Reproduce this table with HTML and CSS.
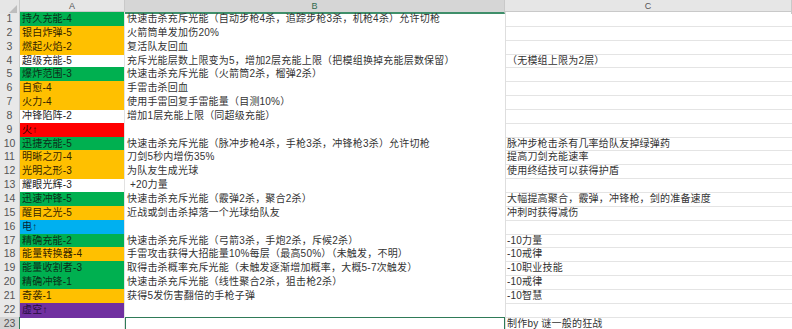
FILE: index.html
```html
<!DOCTYPE html>
<html lang="zh">
<head>
<meta charset="utf-8">
<link rel="stylesheet" href="styles.css">
</head>
<body>
<div class="sheet">
  <div class="row head">
    <div class="rn corner"><span class="tri"></span></div>
    <div class="ch">A</div>
    <div class="ch sel">B</div>
    <div class="ch">C</div>
  </div>
  <div class="row"><div class="rn">1</div><div class="a green">持久充能-4</div><div class="b">快速击杀充斥光能（自动步枪4杀，追踪步枪3杀，机枪4杀）允许切枪</div><div class="c"></div></div>
  <div class="row"><div class="rn">2</div><div class="a orange">银白炸弹-5</div><div class="b">火箭筒单发加伤20%</div><div class="c"></div></div>
  <div class="row"><div class="rn">3</div><div class="a orange">燃起火焰-2</div><div class="b">复活队友回血</div><div class="c"></div></div>
  <div class="row"><div class="rn">4</div><div class="a">超级充能-5</div><div class="b">充斥光能层数上限变为5，增加2层充能上限（把模组换掉充能层数保留）</div><div class="c">（无模组上限为2层）</div></div>
  <div class="row"><div class="rn">5</div><div class="a green">爆炸范围-3</div><div class="b">快速击杀充斥光能（火箭筒2杀，榴弹2杀）</div><div class="c"></div></div>
  <div class="row"><div class="rn">6</div><div class="a orange">自愈-4</div><div class="b">手雷击杀回血</div><div class="c"></div></div>
  <div class="row"><div class="rn">7</div><div class="a orange">火力-4</div><div class="b">使用手雷回复手雷能量（目测10%）</div><div class="c"></div></div>
  <div class="row"><div class="rn">8</div><div class="a">冲锋陷阵-2</div><div class="b">增加1层充能上限（同超级充能）</div><div class="c"></div></div>
  <div class="row"><div class="rn">9</div><div class="a red">火↑</div><div class="b"></div><div class="c"></div></div>
  <div class="row"><div class="rn">10</div><div class="a green">迅捷充能-5</div><div class="b">快速击杀充斥光能（脉冲步枪4杀，手枪3杀，冲锋枪3杀）允许切枪</div><div class="c">脉冲步枪击杀有几率给队友掉绿弹药</div></div>
  <div class="row"><div class="rn">11</div><div class="a orange">明晰之刃-4</div><div class="b">刀剑5秒内增伤35%</div><div class="c">提高刀剑充能速率</div></div>
  <div class="row"><div class="rn">12</div><div class="a orange">光明之形-3</div><div class="b">为队友生成光球</div><div class="c">使用终结技可以获得护盾</div></div>
  <div class="row"><div class="rn">13</div><div class="a">耀眼光辉-3</div><div class="b">&nbsp;+20力量</div><div class="c"></div></div>
  <div class="row"><div class="rn">14</div><div class="a green">迅速冲锋-5</div><div class="b">快速击杀充斥光能（霰弹2杀，聚合2杀）</div><div class="c">大幅提高聚合，霰弹，冲锋枪，剑的准备速度</div></div>
  <div class="row"><div class="rn">15</div><div class="a orange">醒目之光-5</div><div class="b">近战或剑击杀掉落一个光球给队友</div><div class="c">冲刺时获得减伤</div></div>
  <div class="row"><div class="rn">16</div><div class="a blue">电↑</div><div class="b"></div><div class="c"></div></div>
  <div class="row"><div class="rn">17</div><div class="a green">精确充能-2</div><div class="b">快速击杀充斥光能（弓箭3杀，手炮2杀，斥候2杀）</div><div class="c">-10力量</div></div>
  <div class="row"><div class="rn">18</div><div class="a orange">能量转换器-4</div><div class="b">手雷攻击获得大招能量10%每层（最高50%）（未触发，不明）</div><div class="c">-10戒律</div></div>
  <div class="row"><div class="rn">19</div><div class="a green">能量收割者-3</div><div class="b">取得击杀概率充斥光能（未触发逐渐增加概率，大概5-7次触发）</div><div class="c">-10职业技能</div></div>
  <div class="row"><div class="rn">20</div><div class="a green">精确冲锋-1</div><div class="b">快速击杀充斥光能（线性聚合2杀，狙击枪2杀）</div><div class="c">-10戒律</div></div>
  <div class="row"><div class="rn">21</div><div class="a orange">奇袭-1</div><div class="b">获得5发伤害翻倍的手枪子弹</div><div class="c">-10智慧</div></div>
  <div class="row"><div class="rn">22</div><div class="a purple">虚空↑</div><div class="b"></div><div class="c"></div></div>
  <div class="row"><div class="rn selrow">23</div><div class="a"></div><div class="b active"></div><div class="c">制作by 谜一般的狂战</div></div>
</div>
</body>
</html>
```
FILE: styles.css
```css
html, body {
  margin: 0;
  padding: 0;
  background: #ffffff;
}
body {
  font-family: "Liberation Sans", "Noto Sans CJK SC", sans-serif;
  font-size: 10px;
  color: #333333;
  overflow: hidden;
}
.sheet {
  width: 792px;
}
.row {
  display: grid;
  grid-template-columns: 20px 105px 380px 287px;
  height: 13.85px;
  line-height: 13.85px;
}
.row.head {
  height: 12px;
  line-height: 12px;
  background: #e6e6e6;
  border-bottom: 1px solid #c9c9c9;
  box-sizing: border-box;
}
.rn {
  background: #e8e8e8;
  color: #555555;
  text-align: center;
  font-size: 10.5px;
  border-right: 1px solid #c9c9c9;
  border-bottom: 1px solid #dadada;
  box-sizing: border-box;
}
.rn.selrow {
  background: #d4d4d4;
  border-right: 1px solid #2f7b58;
}
.corner {
  position: relative;
  border-bottom: none;
  background: #e6e6e6;
}
.tri {
  position: absolute;
  right: 2px;
  bottom: 1px;
  width: 0;
  height: 0;
  border-left: 8px solid transparent;
  border-bottom: 8px solid #bdbdbd;
}
.ch {
  text-align: center;
  color: #555555;
  font-size: 9px;
  border-right: 1px solid #c9c9c9;
  box-sizing: border-box;
}
.ch.sel {
  background: #d6d6d6;
  color: #2f6b4f;
  border-bottom: 2px solid #3f8f6a;
}
.a, .b, .c {
  white-space: nowrap;
  overflow: hidden;
  box-sizing: border-box;
  letter-spacing: 0.2px;
}
.a {
  padding-left: 2px;
  color: #222222;
  border-right: 1px solid #e2e2e2;
}
.b {
  padding-left: 2px;
}
.b.active {
  border: 1px solid #2f7b58;
}
.c {
  padding-left: 1px;
  border-left: 1px solid #dedede;
  border-bottom: 1px solid #e4e4e4;
}
.green { background: #00b050; color: #0c2e19; }
.orange { background: #ffc000; color: #332400; }
.red { background: #ff0000; color: #330000; }
.blue { background: #00b0f0; color: #082535; }
.purple { background: #7030a0; color: #240c38; }
```
